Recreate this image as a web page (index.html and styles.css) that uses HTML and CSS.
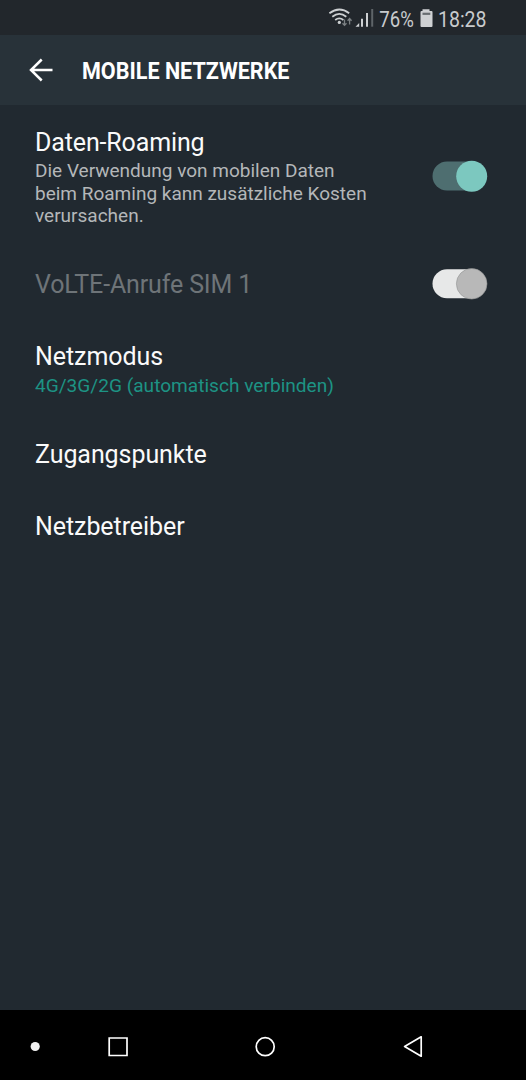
FILE: index.html
```html
<!DOCTYPE html>
<html lang="de">
<head>
<meta charset="utf-8">
<title>Mobile Netzwerke</title>
<link rel="stylesheet" href="styles.css">
</head>
<body>
<div class="screen">
  <div class="status-bar">
    <svg class="status-icons" width="200" height="35" viewBox="0 0 200 35">
      <g fill="none" stroke="#cdd0d2" stroke-width="1.8">
        <path d="M3.4 13.2q10-7.4 19.8 0"/>
        <path d="M6.3 16.7q7-5.6 14 0"/>
        <path d="M9.2 20q4.1-3.3 8.2 0"/>
      </g>
      <circle cx="13.3" cy="22.4" r="1.6" fill="#cdd0d2"/>
      <g fill="none" stroke="#7b8083" stroke-width="1.3">
        <path d="M18.5 19.5v6M16.5 23.2l2 2.2 2-2.2"/>
        <path d="M23.6 24.5v-6M21.6 20.7l2-2.2 2 2.2"/>
      </g>
      <path d="M29.5 26.7l3.7-3.7v3.7zM35 18.7h2v8h-2zM40 13h2v13.7h-2z" fill="#cdd0d2"/>
      <path d="M45.2 9h2v17.7h-2z" fill="#5e6468"/>
      <path d="M96.5 9.2h7v1.7h2q1 0 1 1v14q0 1-1 1h-10q-1 0-1-1v-14q0-1 1-1h1z" fill="#cfd1d3"/>
      <path d="M96.5 12.7h7.8v2.2h-7.8z" fill="#686d70"/>
      <g class="status-text">
        <text x="53.3" y="26.7" textLength="34.5" lengthAdjust="spacingAndGlyphs">76%</text>
        <text x="112" y="26.7" textLength="48.5" lengthAdjust="spacingAndGlyphs">18:28</text>
      </g>
    </svg>
  </div>
  <header class="app-bar">
    <svg class="back" width="26" height="26" viewBox="0 0 26 26"><path d="M24.5 13H3.5M13.7 2.5L3 13l10.700 10.500" fill="none" stroke="#fff" stroke-width="2.5"/></svg>
    <svg class="heading" width="280" height="40" viewBox="0 0 280 40"><text x="1" y="29.4" textLength="207.5" lengthAdjust="spacingAndGlyphs">MOBILE NETZWERKE</text></svg>
  </header>
  <main class="settings">
    <section class="row row-roaming">
      <div>
        <div class="title">Daten-Roaming</div>
        <div class="summary">Die Verwendung von mobilen Daten<br>beim Roaming kann zusätzliche Kosten<br>verursachen.</div>
      </div>
      <svg class="switch" width="56" height="34" viewBox="0 0 56 34"><rect x=".5" y="2.5" width="50" height="29" rx="14.5" fill="#4e6e70"/><circle cx="39.7" cy="17.3" r="15.5" fill="#7cc8bf"/></svg>
    </section>
    <section class="row row-volte">
      <div class="title disabled">VoLTE-Anrufe SIM 1</div>
      <svg class="switch" width="56" height="34" viewBox="0 0 56 34"><rect x=".5" y="1.3" width="50" height="29" rx="14.5" fill="#e7e8e8"/><circle cx="39.7" cy="15.8" r="15.3" fill="#b8b8b8" stroke="#929494" stroke-width=".6"/></svg>
    </section>
    <section class="row row-mode">
      <div>
        <div class="title">Netzmodus</div>
        <div class="summary accent">4G/3G/2G (automatisch verbinden)</div>
      </div>
    </section>
    <section class="row row-single"><div class="title">Zugangspunkte</div></section>
    <section class="row row-single"><div class="title">Netzbetreiber</div></section>
  </main>
  <nav class="nav-bar">
    <svg width="526" height="70" viewBox="0 0 526 70">
      <circle cx="35.2" cy="36.5" r="4.6" fill="#f2f2f2"/>
      <g fill="none" stroke="#fff" stroke-width="1.7">
        <path d="M109.2 28h17.8v17.5h-17.8z"/>
        <circle cx="265.2" cy="36.7" r="9"/>
        <path d="M404.6 36.5l16.6-9.7v19.4z" stroke-linejoin="round"/>
      </g>
    </svg>
  </nav>
</div>
</body>
</html>
```
FILE: styles.css
```css
body {
  margin: 0;
  background: #212930;
  font-family: Roboto, "Noto Sans", sans-serif;
}
.screen {
  display: flex;
  flex-direction: column;
  width: 526px;
  height: 1080px;
  overflow: hidden;
  background: #212930;
}
.status-bar {
  display: flex;
  justify-content: flex-end;
  height: 35px;
  background: #22272c;
}
.status-text {
  font-size: 22.8px;
  fill: #c8cbcd;
}
.app-bar {
  display: flex;
  align-items: center;
  height: 70px;
  background: #283239;
}
.back {
  margin-left: 28px;
}
.heading {
  margin-left: 27px;
  font-size: 24.5px;
  font-weight: 700;
  fill: #fff;
}
.settings {
  flex: 1;
}
.row {
  display: flex;
  justify-content: space-between;
  box-sizing: border-box;
  padding: 0 38px 0 35px;
}
.row-roaming {
  height: 144px;
  padding-top: 22px;
}
.row-roaming .switch {
  margin-top: 32px;
}
.row-volte {
  height: 72px;
  align-items: center;
}
.row-mode {
  height: 98px;
  padding-top: 21px;
}
.row-single {
  height: 72px;
  align-items: center;
}
.title {
  color: #fafafa;
  font-size: 25px;
  line-height: 30px;
  letter-spacing: -0.07px;
  white-space: nowrap;
}
.row-roaming .title {
  padding-top: 1px;
  letter-spacing: -0.14px;
}
.title.disabled {
  color: #6e7478;
  letter-spacing: -0.14px;
}
.summary {
  margin-top: 2px;
  color: #b4b7b9;
  font-size: 19px;
  line-height: 22.5px;
  white-space: nowrap;
}
.summary.accent {
  margin-top: 3px;
  color: #1d9384;
  font-size: 19.1px;
}
.switch {
  flex: none;
}
.nav-bar {
  height: 70px;
  background: #000;
}
.nav-bar svg {
  display: block;
}
```
